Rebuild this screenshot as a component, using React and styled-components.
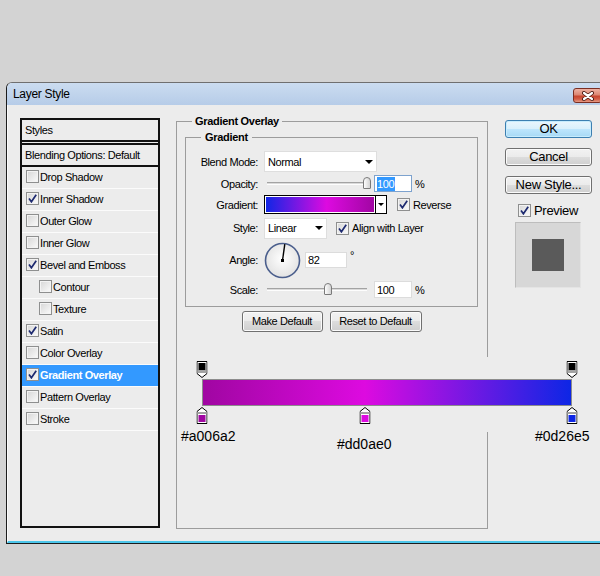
import React from "react";
import styled, { createGlobalStyle } from "styled-components";

const GlobalStyle = createGlobalStyle`
  html, body {
    margin: 0;
    padding: 0;
  }
  body {
    background: #d3d3d3;
    overflow: hidden;
    font-family: "Liberation Sans", Arial, sans-serif;
    font-size: 11px;
    letter-spacing: -0.4px;
    color: #000;
  }
  * {
    box-sizing: border-box;
  }
`;

const effects = [
  { label: "Drop Shadow" },
  { label: "Inner Shadow", checked: true },
  { label: "Outer Glow" },
  { label: "Inner Glow" },
  { label: "Bevel and Emboss", checked: true },
  { label: "Contour", indent: true },
  { label: "Texture", indent: true },
  { label: "Satin", checked: true },
  { label: "Color Overlay" },
  { label: "Gradient Overlay", checked: true, selected: true },
  { label: "Pattern Overlay" },
  { label: "Stroke" },
];

const stops = [
  { pos: 0, color: "#a006a2" },
  { pos: 44, color: "#dd0ae0" },
  { pos: 100, color: "#0d26e5" },
];

// where the hex captions sit under the editor
const captions = [
  { text: "#a006a2", left: 0, top: 71 },
  { text: "#dd0ae0", left: 156, top: 79 },
  { text: "#0d26e5", left: 354, top: 71 },
];

const barGradient = `linear-gradient(to right, ${stops
  .map((s) => `${s.color} ${s.pos}%`)
  .join(", ")})`;
const swatchGradient = `linear-gradient(to right, ${[...stops]
  .reverse()
  .map((s) => `${s.color} ${100 - s.pos}%`)
  .join(", ")})`;

/* ---------- window chrome ---------- */

const Window = styled.div`
  margin: 82px 0 0 6px;
  width: 600px;
  border: 1px solid #1c1c1c;
  border-top-color: #6f6f6f;
  border-radius: 6px 6px 0 0;
  overflow: hidden;
  background: #ececec;
`;

const TitleBar = styled.div`
  height: 22px;
  display: flex;
  align-items: flex-start;
  justify-content: space-between;
  padding-left: 6px;
  background: linear-gradient(#cbdcf0, #b6cce8);
`;

const Title = styled.span`
  font-size: 12px;
  letter-spacing: -0.3px;
  line-height: 23px;
`;

const CloseButton = styled.div`
  width: 29px;
  height: 15px;
  margin: 5px 3px 0 0;
  border: 1px solid #7a2e22;
  border-radius: 3px;
  background: linear-gradient(#eeb1a2 0%, #dc8672 45%, #c8462f 55%, #d25d46 78%, #e69c86 100%);
  display: flex;
  align-items: center;
  justify-content: center;
`;

const Body = styled.div`
  position: relative;
  display: flex;
  align-items: flex-start;
  height: 438px;
  padding: 10px 0 0 12px;
  border-left: 1px solid #fbfbfb;
  border-bottom: 2px solid #4cc6ea;
`;

/* ---------- checkbox ---------- */

const Box = styled.span`
  flex: none;
  width: 13px;
  height: 13px;
  border: 1px solid #8e8f8f;
  background: linear-gradient(135deg, #d6d6d6, #fbfbfb);
  box-shadow: inset 0 0 0 1px #f3f3f3;
  display: inline-flex;
  align-items: center;
  justify-content: center;
`;

const Check = ({ checked }) => (
  <Box>
    {checked && (
      <svg width="9" height="9" viewBox="0 0 9 9">
        <path d="M1 4.6 L3.4 7.8 L8.2 0.8" fill="none" stroke="#1d2a70" strokeWidth="1.7" />
      </svg>
    )}
  </Box>
);

/* ---------- styles list ---------- */

const StylesPanel = styled.div`
  flex: none;
  width: 140px;
  height: 410px;
  margin-top: 3px;
  border: 2px solid #111;
`;

const PanelHeader = styled.div`
  height: 22px;
  line-height: 20px;
  padding-left: 3px;
  border-bottom: 2px solid #111;
  margin-bottom: 1px;
`;

const PanelBlend = styled.div`
  height: 24px;
  line-height: 20px;
  padding-left: 3px;
  border-top: 2px solid #111;
  border-bottom: 2px solid #111;
`;

const PanelRow = styled.div`
  height: 22px;
  display: flex;
  align-items: center;
  gap: 1px;
  padding: 0 0 2px ${(p) => (p.$indent ? 17 : 4)}px;
  border-bottom: 1px solid #fbfbfb;
  background: ${(p) => (p.$selected ? "#3399ff" : "transparent")};
  color: ${(p) => (p.$selected ? "#fff" : "#000")};
  font-weight: ${(p) => (p.$selected ? "bold" : "normal")};
`;

/* ---------- middle groups ---------- */

const Group = styled.fieldset`
  flex: none;
  margin: 0 0 0 16px;
  width: 312px;
  height: 414px;
  padding: 0 9px 0 8px;
  border: 1px solid #9c9c9c;
  min-inline-size: 0;
`;

const InnerGroup = styled.fieldset`
  margin: 3px 0 0;
  padding: 7px 0 8px;
  border: 1px solid #9c9c9c;
  min-inline-size: 0;
`;

const Legend = styled.legend`
  margin-left: ${(p) => p.$offset}px;
  padding: 0 ${(p) => p.$pad}px;
  font-weight: bold;
  line-height: 13px;
  letter-spacing: -0.3px;
`;

const Form = styled.div`
  display: flex;
  flex-direction: column;
  gap: 3px;
`;

const FormRow = styled.div`
  display: flex;
  align-items: center;
  height: ${(p) => p.$h}px;
`;

const FieldLabel = styled.span`
  flex: none;
  width: 72px;
  margin-right: 6px;
  text-align: right;
`;

const Select = styled.div`
  width: ${(p) => p.$w}px;
  height: 21px;
  padding: 0 3px;
  display: flex;
  align-items: center;
  justify-content: space-between;
  background: #fff;
  border: 1px solid #dedede;
`;

const Arrow = styled.span`
  width: 0;
  height: 0;
  border-left: ${(p) => p.$size}px solid transparent;
  border-right: ${(p) => p.$size}px solid transparent;
  border-top: ${(p) => p.$size}px solid #000;
`;

const Slider = styled.div`
  position: relative;
  flex: none;
  width: 100px;
  height: 17px;
  margin-left: 3px;
`;

const Track = styled.div`
  position: absolute;
  left: 0;
  right: 0;
  top: 7px;
  height: 3px;
  border-top: 1px solid #a3a3a3;
  border-bottom: 1px solid #fdfdfd;
  background: #dadada;
`;

const Thumb = styled.div`
  position: absolute;
  top: 2px;
  width: 8px;
  height: 12px;
  transform: translateX(-50%);
  border: 1px solid #7a7a7a;
  border-radius: 4px 4px 1px 1px;
  background: linear-gradient(90deg, #fdfdfd, #d3d3d3);
`;

const NumberBox = styled.div`
  flex: none;
  width: ${(p) => p.$w}px;
  height: ${(p) => p.$h}px;
  margin-left: ${(p) => p.$ml}px;
  padding-left: 2px;
  display: flex;
  align-items: center;
  background: #fff;
  border: 1px solid ${(p) => (p.$focus ? "#7da2ce" : "#dcdcdc")};
`;

const Selection = styled.span`
  background: #3399ff;
  color: #fff;
  padding: 1px 1px 1px 0;
`;

const Unit = styled.span`
  margin-left: 3px;
  align-self: ${(p) => (p.$top ? "flex-start" : "center")};
  margin-top: ${(p) => (p.$top ? 7 : 0)}px;
`;

const Swatch = styled.div`
  flex: none;
  width: 123px;
  height: 19px;
  display: flex;
  border: 1px solid #000;
`;

const SwatchFill = styled.div`
  flex: 1;
  background: ${swatchGradient};
  box-shadow: inset 0 0 0 1px #fff;
`;

const SwatchArrow = styled.div`
  width: 11px;
  border-left: 1px solid #000;
  background: #fff;
  display: flex;
  align-items: center;
  justify-content: center;
`;

const Toggle = styled.label`
  display: flex;
  align-items: center;
  gap: 3px;
  margin-left: ${(p) => p.$ml}px;
`;

const ButtonBar = styled.div`
  display: flex;
  justify-content: center;
  gap: 7px;
  margin-top: 4px;
`;

const Button = styled.div`
  width: ${(p) => p.$w}px;
  height: 21px;
  line-height: 19px;
  text-align: center;
  border: 1px solid #707070;
  border-radius: 3px;
  background: linear-gradient(#f2f2f2 0%, #ebebeb 50%, #dddddd 50%, #cfcfcf 100%);
  box-shadow: inset 0 0 0 1px #fbfbfb;
`;

/* ---------- right column ---------- */

const SideColumn = styled.div`
  flex: none;
  width: 87px;
  margin-left: 17px;
  padding-top: 5px;
  display: flex;
  flex-direction: column;
`;

const SideButton = styled.div`
  height: 18px;
  margin-bottom: 10px;
  line-height: 16px;
  text-align: center;
  font-size: 13px;
  letter-spacing: -0.3px;
  border: 1px solid ${(p) => (p.$primary ? "#3c7fb1" : "#707070")};
  border-radius: 3px;
  background: ${(p) =>
    p.$primary
      ? "linear-gradient(#eaf6fd 0%, #d9f0fc 50%, #bee6fd 50%, #a7d9f5 100%)"
      : "linear-gradient(#f2f2f2 0%, #ebebeb 50%, #dddddd 50%, #cfcfcf 100%)"};
  box-shadow: inset 0 0 0 1px ${(p) => (p.$primary ? "#c7ecfd" : "#fbfbfb")};
`;

const PreviewToggle = styled.label`
  display: flex;
  align-items: center;
  gap: 3px;
  padding-left: 13px;
  font-size: 13px;
  letter-spacing: -0.3px;
  line-height: 13px;
`;

const PreviewBox = styled.div`
  width: 66px;
  height: 66px;
  margin: 5px 0 0 10px;
  display: flex;
  align-items: center;
  justify-content: center;
  background: #d7d7d7;
  border-top: 1px solid #bdbdbd;
  border-left: 1px solid #bdbdbd;
  border-right: 1px solid #e4e4e4;
  border-bottom: 1px solid #e4e4e4;
`;

const PreviewSquare = styled.div`
  width: 32px;
  height: 32px;
  background: #5a5a5a;
`;

/* ---------- gradient editor laid over the dialog ---------- */

const Editor = styled.div`
  position: absolute;
  left: 173px;
  top: 252px;
  width: 419px;
  height: 100px;
`;

const Strip = styled.div`
  height: 75px;
  padding: 4px 0 0 21px;
  background: #ececec;
`;

const Lane = styled.div`
  position: relative;
  width: 370px;
  height: 17px;
  margin-top: ${(p) => p.$mt}px;
`;

const StopMark = styled.svg`
  position: absolute;
  top: 0;
  transform: translateX(-50%);
`;

const Bar = styled.div`
  width: 370px;
  height: 27px;
  margin-top: 1px;
  border: 1px solid #8c8c8c;
  background: ${barGradient};
`;

const HexLabel = styled.span`
  position: absolute;
  font-size: 14px;
  line-height: 16px;
  letter-spacing: 0;
`;

const OpacityStop = ({ pos }) => (
  <StopMark width="11" height="17" viewBox="0 0 11 17" style={{ left: `${pos}%` }}>
    <path d="M0.5 0.5 H10.5 V12.5 L5.5 16.5 L0.5 12.5 Z" fill="#fff" stroke="#000" />
    <rect x="2" y="2" width="7" height="7" fill="#000" />
    <rect x="1" y="9" width="9" height="3" fill="#a3a3a3" />
  </StopMark>
);

const ColorStop = ({ pos, color }) => (
  <StopMark width="11" height="17" viewBox="0 0 11 17" style={{ left: `${pos}%` }}>
    <path d="M0.5 16.5 H10.5 V4.5 L5.5 0.5 L0.5 4.5 Z" fill="#fff" stroke="#000" />
    <rect x="1" y="5" width="9" height="2" fill="#a3a3a3" />
    <rect x="2" y="8" width="7" height="7" fill={color} />
  </StopMark>
);

const Dial = ({ angle }) => {
  const r = (angle * Math.PI) / 180;
  const x = 18.5 + 16.5 * Math.cos(r);
  const y = 18.5 - 16.5 * Math.sin(r);
  return (
    <svg width="37" height="37" viewBox="0 0 37 37" style={{ flex: "none" }}>
      <defs>
        <radialGradient id="dialFill" cx="50%" cy="45%" r="55%">
          <stop offset="0%" stopColor="#ffffff" />
          <stop offset="100%" stopColor="#e2e2e2" />
        </radialGradient>
      </defs>
      <circle cx="18.5" cy="18.5" r="17" fill="url(#dialFill)" stroke="#4a5e8c" strokeWidth="1.6" />
      <line x1="18.5" y1="18.5" x2={x} y2={y} stroke="#000" strokeWidth="1.4" />
      <rect x="17" y="17" width="3" height="3" fill="#000" />
    </svg>
  );
};

const App = () => {
  return (
    <>
      <GlobalStyle />
      <Window>
        <TitleBar>
          <Title>Layer Style</Title>
          <CloseButton>
            <svg width="14" height="10" viewBox="0 0 14 10">
              <path d="M3 2 L11 8 M11 2 L3 8" stroke="#4a1a12" strokeWidth="4" strokeLinecap="round" />
              <path d="M3 2 L11 8 M11 2 L3 8" stroke="#fff" strokeWidth="2.2" strokeLinecap="round" />
            </svg>
          </CloseButton>
        </TitleBar>

        <Body>
          <StylesPanel>
            <PanelHeader>Styles</PanelHeader>
            <PanelBlend>Blending Options: Default</PanelBlend>
            {effects.map((fx) => (
              <PanelRow key={fx.label} $indent={fx.indent} $selected={fx.selected}>
                <Check checked={fx.checked} />
                <span>{fx.label}</span>
              </PanelRow>
            ))}
          </StylesPanel>

          <Group>
            <Legend $offset={7} $pad={3}>Gradient Overlay</Legend>
            <InnerGroup>
              <Legend $offset={15} $pad={4}>Gradient</Legend>
              <Form>
                <FormRow $h={21}>
                  <FieldLabel>Blend Mode:</FieldLabel>
                  <Select $w={113}>
                    <span>Normal</span>
                    <Arrow $size={4} />
                  </Select>
                </FormRow>
                <FormRow $h={17}>
                  <FieldLabel>Opacity:</FieldLabel>
                  <Slider>
                    <Track />
                    <Thumb style={{ left: "100%" }} />
                  </Slider>
                  <NumberBox $w={38} $h={17} $ml={7} $focus>
                    <Selection>100</Selection>
                  </NumberBox>
                  <Unit>%</Unit>
                </FormRow>
                <FormRow $h={19}>
                  <FieldLabel>Gradient:</FieldLabel>
                  <Swatch>
                    <SwatchFill />
                    <SwatchArrow>
                      <Arrow $size={3} />
                    </SwatchArrow>
                  </Swatch>
                  <Toggle $ml={10}>
                    <Check checked />
                    <span>Reverse</span>
                  </Toggle>
                </FormRow>
                <FormRow $h={22}>
                  <FieldLabel>Style:</FieldLabel>
                  <Select $w={63}>
                    <span>Linear</span>
                    <Arrow $size={4} />
                  </Select>
                  <Toggle $ml={9}>
                    <Check checked />
                    <span>Align with Layer</span>
                  </Toggle>
                </FormRow>
                <FormRow $h={36}>
                  <FieldLabel>Angle:</FieldLabel>
                  <Dial angle={82} />
                  <NumberBox $w={42} $h={16} $ml={4}>
                    82
                  </NumberBox>
                  <Unit $top>°</Unit>
                </FormRow>
                <FormRow $h={17}>
                  <FieldLabel>Scale:</FieldLabel>
                  <Slider>
                    <Track />
                    <Thumb style={{ left: "61%" }} />
                  </Slider>
                  <NumberBox $w={38} $h={17} $ml={7}>
                    100
                  </NumberBox>
                  <Unit>%</Unit>
                </FormRow>
              </Form>
            </InnerGroup>
            <ButtonBar>
              <Button $w={81}>Make Default</Button>
              <Button $w={92}>Reset to Default</Button>
            </ButtonBar>
          </Group>

          <SideColumn>
            <SideButton $primary>OK</SideButton>
            <SideButton>Cancel</SideButton>
            <SideButton>New Style...</SideButton>
            <PreviewToggle>
              <Check checked />
              <span>Preview</span>
            </PreviewToggle>
            <PreviewBox>
              <PreviewSquare />
            </PreviewBox>
          </SideColumn>

          <Editor>
            <Strip>
              <Lane $mt={0}>
                <OpacityStop pos={0} />
                <OpacityStop pos={100} />
              </Lane>
              <Bar />
              <Lane $mt={1}>
                {stops.map((s) => (
                  <ColorStop key={s.color} pos={s.pos} color={s.color} />
                ))}
              </Lane>
            </Strip>
            {captions.map((c) => (
              <HexLabel key={c.text} style={{ left: c.left, top: c.top }}>
                {c.text}
              </HexLabel>
            ))}
          </Editor>
        </Body>
      </Window>
    </>
  );
};

export default App;
